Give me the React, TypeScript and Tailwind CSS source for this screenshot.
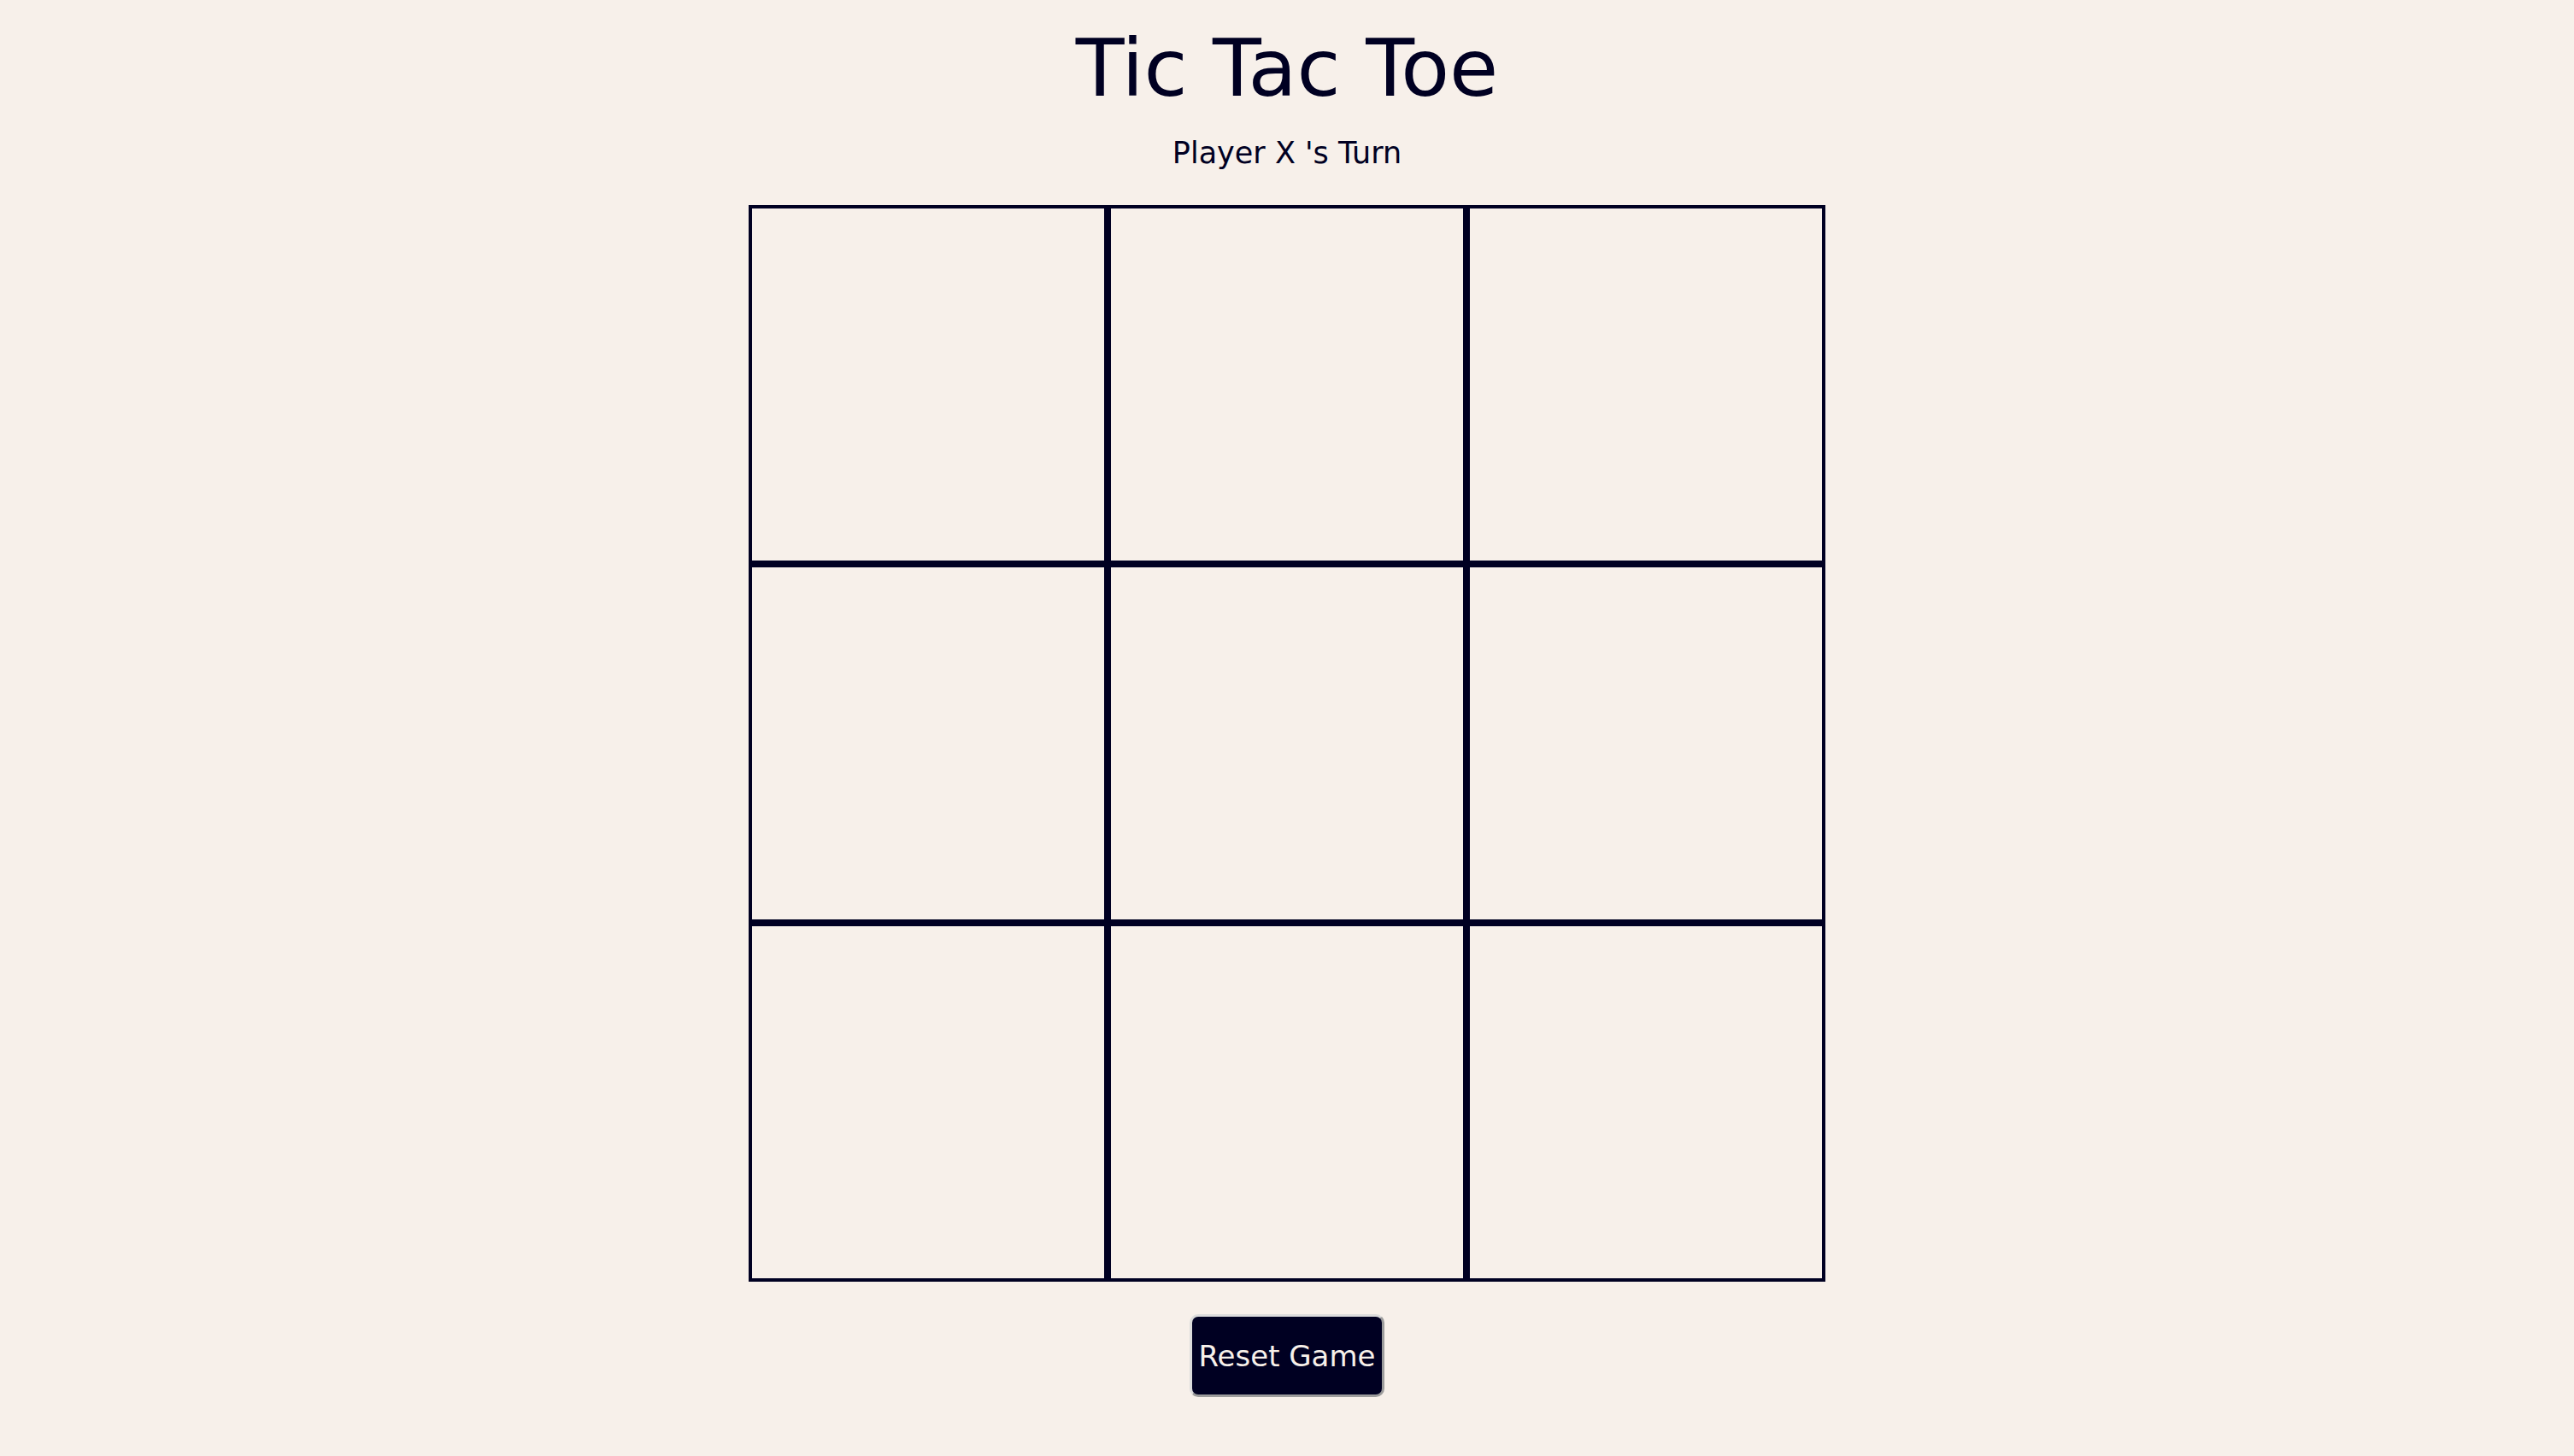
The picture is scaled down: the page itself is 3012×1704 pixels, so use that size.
import React, { useState } from "react";

export default function App() {
  const [cells, setCells] = useState<(string | null)[]>(Array(9).fill(null));
  const [xTurn, setXTurn] = useState(true);

  const play = (i: number) => {
    if (cells[i]) return;
    const next = cells.slice();
    next[i] = xTurn ? "X" : "O";
    setCells(next);
    setXTurn(!xTurn);
  };

  const reset = () => {
    setCells(Array(9).fill(null));
    setXTurn(true);
  };

  return (
    <div
      className="min-h-screen w-full bg-[#f7f0ea] text-[#000022] flex flex-col items-center"
      style={{ fontFamily: "'DejaVu Sans', Verdana, sans-serif" }}
    >
      <h1 className="mt-[34px] text-[93px] leading-none font-normal">Tic Tac Toe</h1>
      <p className="mt-[35px] text-[35px] leading-none">Player {xTurn ? "X" : "O"} 's Turn</p>
      <div className="mt-[43px] grid grid-cols-3 w-[1260px] h-[1260px]">
        {cells.map((c, i) => (
          <div
            key={i}
            onClick={() => play(i)}
            className="w-[420px] h-[420px] border-4 border-[#000022] flex items-center justify-center text-[200px] leading-none cursor-pointer"
          >
            {c}
          </div>
        ))}
      </div>
      <button
        onClick={reset}
        className="mt-[38px] w-[228px] h-[97px] rounded-[10px] bg-[#000022] text-[#f7f0ea] text-[34px] leading-none flex items-center justify-center border-[3px] border-t-[#dcdcdc] border-l-[#dcdcdc] border-b-[#9c9c9c] border-r-[#9c9c9c]"
        style={{ fontFamily: "'DejaVu Sans', Verdana, sans-serif" }}
      >
        Reset Game
      </button>
    </div>
  );
}
